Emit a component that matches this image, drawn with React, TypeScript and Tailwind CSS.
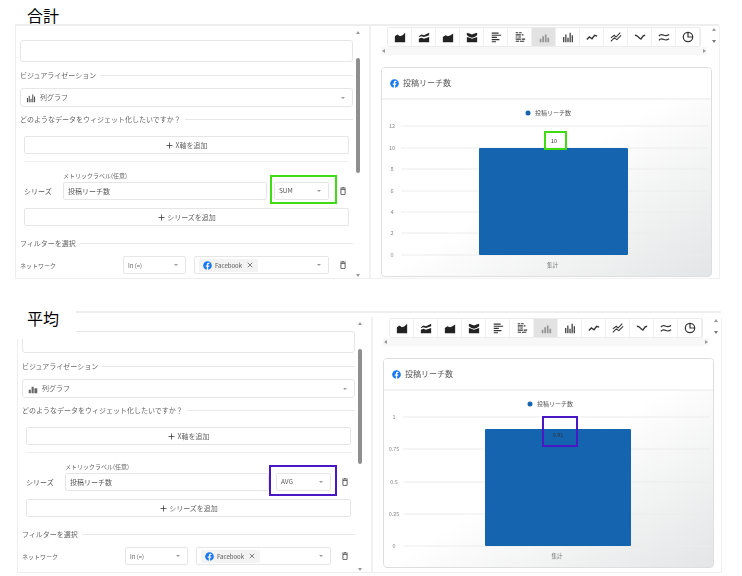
import { Plus, X } from "lucide-react";
import { FaFacebook } from "react-icons/fa";
import { MdOutlineDelete } from "react-icons/md";

const font = { fontFamily: '"Noto Sans CJK JP", "Noto Sans", sans-serif' };

function AreaIcon({ kind }: { kind: number }) {
  const paths: Record<number, string> = {
    0: "M1 13V6l3-2 3 2 3-1 3-3v11z",
    1: "M1 6l3-2 3 1 6-3v3l-6 2-3-1-3 1zM1 9l3-1 3 1 6-2v6H1z",
    2: "M1 13V7l3-2 3 1 3-1 3-2v10z",
    3: "M1 2l3 1 3 1 3-1 3-1v3l-3 2-3 1-3-1-3-2zM1 7l3 1 3 1 6-2v6H1z",
  };
  return <path d={paths[kind]} fill="#222" />;
}

function ToolIcon({ i, active }: { i: number; active: boolean }) {
  const stroke = "#333";
  return (
    <svg width="12" height="12" viewBox="0 0 14 14" fill="none" className={active ? "opacity-40" : ""}>
      {i < 4 && <AreaIcon kind={i} />}
      {i === 4 && (
        <path d="M2 2.5h8M2 5h11M2 7.5h6M2 10h9M2 12.5h5" stroke={stroke} strokeWidth="1.3" />
      )}
      {i === 5 && (
        <path
          d="M2 2h3M6 2h3M2 4.5h6M9 4.5h2M2 7h2M5 7h3M2 9.5h6M9 9.5h4M2 12h4M7 12h5"
          stroke={stroke}
          strokeWidth="1.3"
        />
      )}
      {i === 6 && <path d="M2 13V9h2v4zM5 13V6h2v7zM8 13V4h2v9zM11 13V8h2v5z" fill="#222" />}
      {i === 7 && (
        <path d="M2 13V7M4.5 13V4M7 13V8M9.5 13V2M12 13V5" stroke={stroke} strokeWidth="1.4" />
      )}
      {i === 8 && <path d="M1 10l3-3 3 2 3-4 3 1" stroke={stroke} strokeWidth="1.6" />}
      {i === 9 && (
        <path d="M1 8l4-3 2 2 5-5M1 12l4-4 3 2 5-5" stroke={stroke} strokeWidth="1.2" />
      )}
      {i === 10 && (
        <path d="M1 5c3 0 3 1 5 3s2 2 3 0 2-3 4-3" stroke={stroke} strokeWidth="1.6" />
      )}
      {i === 11 && (
        <path
          d="M1 6c2-3 4-2 6-1s3 1 6-1M1 11c2-3 4-2 6-1s3 1 6-1"
          stroke={stroke}
          strokeWidth="1.3"
        />
      )}
      {i === 12 && (
        <g stroke={stroke} strokeWidth="1.4">
          <circle cx="7" cy="7" r="5.5" />
          <path d="M7 1.5V7h5.5" />
        </g>
      )}
    </svg>
  );
}

function Caret() {
  return <span className="w-0 h-0 border-x-[2.5px] border-x-transparent border-t-[2.5px] border-t-[#999]" />;
}

function SectionLabel({ text }: { text: string }) {
  return (
    <div className="flex items-center gap-[4px] h-[12px] text-[7px] text-[#666]">
      <span className="whitespace-nowrap">{text}</span>
      <span className="flex-1 h-px bg-[#e8e8e8]" />
    </div>
  );
}

function AddButton({ text, className }: { text: string; className: string }) {
  return (
    <div
      className={`h-[18px] mx-[4px] border border-[#e6e6e6] rounded-[2px] flex items-center justify-center gap-[1px] text-[7px] text-[#666] ${className}`}
    >
      <Plus size={9} strokeWidth={2} className="text-[#333]" />
      {text}
    </div>
  );
}

type Mark = { color: string; left: number; right: number; top: number; bottom: number };

type ChartData = {
  ticks: { label: string; y: number }[];
  barLeft: number;
  barRight: number;
  barTop: number;
  value: string;
  valueY: number;
  valueX: number;
  box: { x: number; y: number; w: number; h: number; color: string };
};

function Chart({ data }: { data: ChartData }) {
  const { ticks, barLeft, barRight, barTop, value, valueX, valueY, box } = data;
  const base = ticks[ticks.length - 1].y;
  return (
    <svg width="331" height="177" className="block" style={font}>
      <circle cx="146" cy="13" r="2.5" fill="#1464b0" />
      <text x="153" y="15" fontSize="6" fill="#555">
        投稿リーチ数
      </text>
      {ticks.map((t) => (
        <g key={t.label}>
          <line x1="19" x2="326" y1={t.y} y2={t.y} stroke="#ececec" />
          <text x="10" y={t.y + 2} fontSize="5.5" fill="#888" textAnchor="middle">
            {t.label}
          </text>
        </g>
      ))}
      <rect x={barLeft} y={barTop} width={barRight - barLeft} height={base - barTop} fill="#1464b0" rx="1" />
      <text x={valueX} y={valueY} fontSize="5.5" fill="#333" textAnchor="middle">
        {value}
      </text>
      <rect x={box.x} y={box.y} width={box.w} height={box.h} fill="none" stroke={box.color} strokeWidth="2" />
      <text x={(barLeft + barRight) / 2 - 1} y={base + 12} fontSize="5.5" fill="#777" textAnchor="middle">
        集計
      </text>
    </svg>
  );
}

function Panel({
  title,
  agg,
  mark,
  thinBars,
  chart,
  className,
  titleClass,
  bodyClass,
}: {
  title: string;
  agg: string;
  mark: Mark;
  thinBars: boolean;
  chart: ChartData;
  className: string;
  titleClass: string;
  bodyClass: string;
}) {
  return (
    <section className={`relative ${className}`}>
      <div className={`absolute bg-white z-10 text-[16px] leading-[20px] text-black ${titleClass}`}>{title}</div>
      <div className={`flex w-[704px] border-t-2 border-[#eeeeee] blur-[0.5px] ${bodyClass}`}>
        {/* left form */}
        <div className="w-[354px] shrink-0 flex border-l border-[#eeeeee] border-b">
          <div className="w-[338px] pl-[4px] pr-[1px] pt-[14px] shrink-0">
            <div className="h-[22px] border border-[#e6e6e6] rounded-[3px]" />
            <div className="mt-[7px]">
              <SectionLabel text="ビジュアライゼーション" />
            </div>
            <div className="mt-[7px] h-[19px] border border-[#e6e6e6] rounded-[3px] flex items-center pl-[5px] pr-[7px] gap-[4px] text-[7px] text-[#666]">
              <svg width="10" height="10" viewBox="0 0 14 14">
                {thinBars ? (
                  <path d="M2 13V7M4.5 13V4M7 13V8M9.5 13V2M12 13V5" stroke="#444" strokeWidth="1.4" />
                ) : (
                  <path d="M1 13V8h3v5zM5 13V4h3v9zM9 13V6h4v7z" fill="#666" />
                )}
              </svg>
              <span className="flex-1">列グラフ</span>
              <Caret />
            </div>
            <div className="mt-[6px]">
              <SectionLabel text="どのようなデータをウィジェット化したいですか？" />
            </div>
            <AddButton text="X軸を追加" className="mt-[11px]" />
            <div className="mt-[7px] mx-[4px] h-px bg-[#eeeeee]" />
            <div className="mt-[8px] pl-[43px] h-[12px] text-[6px] leading-[12px] text-[#666]">
              メトリックラベル(任意)
            </div>
            <div className="flex items-center pl-[4px]">
              <span className="w-[39px] text-[7px] text-[#555]">シリーズ</span>
              <div className="w-[204px] h-[18px] border border-[#e6e6e6] rounded-[2px] flex items-center px-[4px] text-[7px] text-[#555]">
                投稿リーチ数
              </div>
              <div className="relative ml-[7px] w-[55px] h-[18px] border border-[#e6e6e6] rounded-[2px] flex items-center justify-between pl-[4px] pr-[7px] text-[6.5px] text-[#555]">
                {agg}
                <Caret />
                <span
                  className="absolute border-2"
                  style={{
                    borderColor: mark.color,
                    left: -mark.left,
                    right: -mark.right,
                    top: -mark.top,
                    bottom: -mark.bottom,
                  }}
                />
              </div>
              <MdOutlineDelete size={10} className="ml-[9px] text-[#444]" />
            </div>
            <AddButton text="シリーズを追加" className="mt-[8px]" />
            <div className="mt-[11px]">
              <SectionLabel text="フィルターを選択" />
            </div>
            <div className="mt-[7px] flex items-center">
              <span className="w-[103px] text-[6px] text-[#666]">ネットワーク</span>
              <div className="w-[63px] h-[18px] border border-[#e6e6e6] rounded-[2px] flex items-center justify-between pl-[4px] pr-[7px] text-[6px] text-[#666]">
                In (=)
                <Caret />
              </div>
              <div className="ml-[8px] w-[135px] h-[18px] border border-[#e6e6e6] rounded-[2px] flex items-center justify-between pl-[4px] pr-[7px]">
                <span className="h-[13px] bg-[#f3f3f3] rounded-[2px] flex items-center gap-[3px] px-[4px] text-[6px] text-[#555]">
                  <FaFacebook size={9} className="text-[#1877f2]" />
                  Facebook
                  <X size={8} className="ml-[1px] text-[#444]" />
                </span>
                <Caret />
              </div>
              <MdOutlineDelete size={10} className="ml-[9px] text-[#444]" />
            </div>
          </div>
          {/* form scrollbar */}
          <div className="w-[5px] ml-px flex flex-col items-center pb-[1px]">
            <span className="mt-[5px] w-0 h-0 border-x-[2px] border-x-transparent border-b-[3px] border-b-[#999]" />
            <span className="mt-[24px] w-[4px] h-[115px] rounded-full bg-[#8f8f8f]" />
            <span className="mt-auto w-0 h-0 border-x-[2px] border-x-transparent border-t-[3px] border-t-[#999]" />
          </div>
        </div>
        {/* right preview */}
        <div className="flex-1 border-l-2 border-r border-b border-[#f1f1f1] pl-[10px] pr-[7px]">
          <div className="flex pt-[1px] h-[21px] pl-[6px] relative">
            <div className="flex border border-[#ececec] rounded-[2px] h-[20px]">
              {Array.from({ length: 13 }).map((_, i) => (
                <div
                  key={i}
                  className={`w-[24px] flex items-center justify-center border-r border-[#f0f0f0] ${i === 6 ? "bg-[#e2e2e2]" : ""}`}
                >
                  <ToolIcon i={i} active={i === 6} />
                </div>
              ))}
            </div>
            <div className="absolute right-[-4px] top-[2px] flex flex-col gap-[9px]">
              <span className="w-0 h-0 border-x-[2.5px] border-x-transparent border-b-[3px] border-b-[#999]" />
              <span className="w-0 h-0 border-x-[2.5px] border-x-transparent border-t-[3px] border-t-[#777]" />
            </div>
          </div>
          <div className="h-[8px] bg-[#f8f8f8] flex items-center justify-between px-[1px] w-[326px]">
            <span className="w-0 h-0 border-y-[2px] border-y-transparent border-r-[3px] border-r-[#999]" />
            <span className="w-0 h-0 border-y-[2px] border-y-transparent border-l-[3px] border-l-[#999]" />
          </div>
          <div className="mt-[12px] w-[331px] h-[210px] border border-[#dedede] rounded-[4px] overflow-hidden bg-linear-to-br from-white via-white to-[#e4e5e6]">
            <div className="h-[32px] border-b-2 border-[#f3f3f3] bg-white flex items-center gap-[4px] pl-[8px] text-[8px] text-[#555]">
              <FaFacebook size={9} className="text-[#1877f2]" />
              投稿リーチ数
            </div>
            <Chart data={chart} />
          </div>
        </div>
      </div>
    </section>
  );
}

export default function App() {
  return (
    <main className="w-[742px] h-[576px] bg-white overflow-hidden" style={font}>
      <Panel
        title="合計"
        agg="SUM"
        thinBars
        mark={{ color: "#3fdc14", left: 5, right: 9, top: 8, bottom: 5 }}
        className="pl-[15px] pt-[24px] h-[311px]"
        bodyClass="h-[255px]"
        titleClass="left-0 top-[5px] w-[76px] h-[19px] pl-[27px]"
        chart={{
          ticks: [
            { label: "12", y: 26 },
            { label: "10", y: 48 },
            { label: "8", y: 69 },
            { label: "6", y: 91 },
            { label: "4", y: 112 },
            { label: "2", y: 133 },
            { label: "0", y: 155 },
          ],
          barLeft: 97,
          barRight: 246,
          barTop: 48,
          value: "10",
          valueX: 172,
          valueY: 43,
          box: { x: 163, y: 32, w: 21, h: 17, color: "#3fdc14" },
        }}
      />
      <Panel
        title="平均"
        agg="AVG"
        mark={{ color: "#4a17c4", left: 8, right: 7, top: 9, bottom: 6 }}
        thinBars={false}
        className="pl-[17px] h-[265px]"
        bodyClass="h-[262px] pt-[4px]"
        titleClass="left-0 top-[-3px] w-[76px] h-[31px] pl-[27px]"
        chart={{
          ticks: [
            { label: "1", y: 26 },
            { label: "0.75", y: 58 },
            { label: "0.5", y: 91 },
            { label: "0.25", y: 123 },
            { label: "0", y: 155 },
          ],
          barLeft: 101,
          barRight: 247,
          barTop: 38,
          value: "0.91",
          valueX: 174,
          valueY: 46,
          box: { x: 159, y: 26, w: 34, h: 29, color: "#4a17c4" },
        }}
      />
    </main>
  );
}
